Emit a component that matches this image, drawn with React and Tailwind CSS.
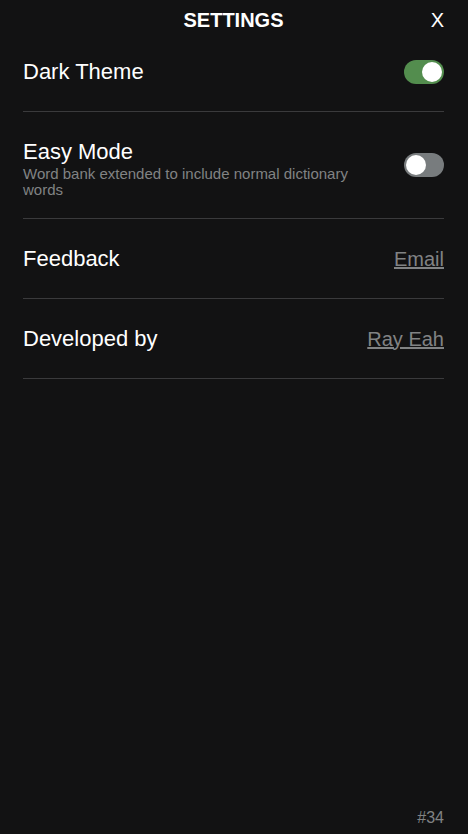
import React, { useState } from 'react';

function Toggle({ on, onClick }) {
  return (
    <button
      onClick={onClick}
      className={`relative h-[24px] w-[40px] shrink-0 rounded-full ${on ? 'bg-[#538d4e]' : 'bg-[#787c7e]'}`}
    >
      <span
        className={`absolute top-[2px] h-[20px] w-[20px] rounded-full bg-white ${on ? 'left-[18px]' : 'left-[2px]'}`}
      />
    </button>
  );
}

export default function App() {
  const [dark, setDark] = useState(true);
  const [easy, setEasy] = useState(false);

  return (
    <div
      className="flex min-h-screen flex-col bg-[#121213] text-white"
      style={{ fontFamily: '"Liberation Sans", Arial, Helvetica, sans-serif' }}
    >
      {/* Header */}
      <div className="flex h-[32px] items-start justify-between pl-[23px] pr-[24px] pt-[8px]">
        <div className="w-[20px]" />
        <h1 className="text-[20px] font-bold leading-[24px] tracking-normal">SETTINGS</h1>
        <button className="w-[20px] text-right text-[20px] leading-[24px]">X</button>
      </div>

      <div className="pl-[23px] pr-[24px]">
        <div className="flex h-[80px] items-center justify-between border-b border-[#3a3a3c]">
          <div className="text-[22px] leading-[28px]">Dark Theme</div>
          <Toggle on={dark} onClick={() => setDark(!dark)} />
        </div>

        <div className="flex h-[107px] items-center justify-between border-b border-[#3a3a3c]">
          <div className="pt-[5px]">
            <div className="text-[22px] leading-[28px]">Easy Mode</div>
            <div className="max-w-[345px] text-[15px] leading-[16px] text-[#818384]">
              Word bank extended to include normal dictionary words
            </div>
          </div>
          <Toggle on={easy} onClick={() => setEasy(!easy)} />
        </div>

        <div className="flex h-[80px] items-center justify-between border-b border-[#3a3a3c]">
          <div className="text-[22px] leading-[28px]">Feedback</div>
          <a href="#" className="text-[20px] leading-[24px] text-[#818384] underline">Email</a>
        </div>

        <div className="flex h-[80px] items-center justify-between border-b border-[#3a3a3c]">
          <div className="text-[22px] leading-[28px]">Developed by</div>
          <a href="#" className="text-[20px] leading-[24px] text-[#818384] underline">Ray Eah</a>
        </div>
      </div>

      <div className="flex flex-1 items-end justify-end pb-[7px] pr-[24px]">
        <span className="text-[16px] leading-[18px] text-[#818384]">#34</span>
      </div>
    </div>
  );
}
